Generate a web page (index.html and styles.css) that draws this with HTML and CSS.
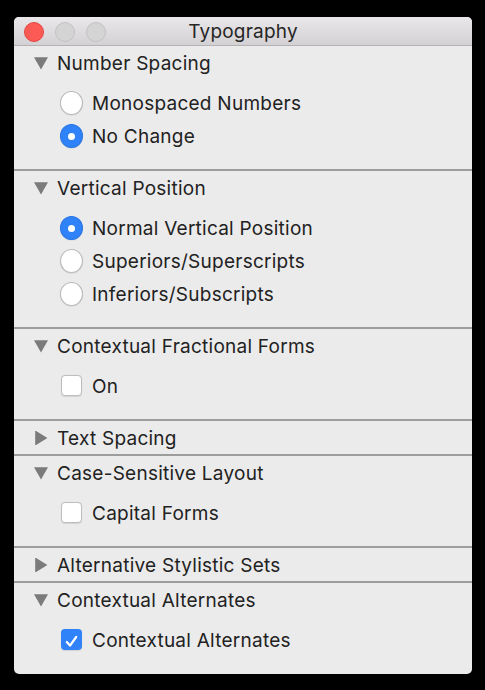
FILE: index.html
```html
<!DOCTYPE html>
<html>
<head>
<meta charset="utf-8">
<link rel="stylesheet" href="styles.css">
</head>
<body>
<div class="window">
  <div class="titlebar">
    <div class="lights">
      <span class="light close"></span>
      <span class="light"></span>
      <span class="light"></span>
    </div>
    <div class="title">Typography</div>
    <div></div>
  </div>

  <div class="section">
    <div class="heading"><svg class="tri" viewBox="0 0 12 12"><path d="M0 1 L12 1 L6 11.5 Z"/></svg><span>Number Spacing</span></div>
    <div class="items">
      <div class="item"><span class="ctl"><span class="radio"></span></span><span>Monospaced Numbers</span></div>
      <div class="item"><span class="ctl"><span class="radio on"></span></span><span>No Change</span></div>
    </div>
  </div>

  <div class="section">
    <div class="heading"><svg class="tri" viewBox="0 0 12 12"><path d="M0 1 L12 1 L6 11.5 Z"/></svg><span>Vertical Position</span></div>
    <div class="items">
      <div class="item"><span class="ctl"><span class="radio on"></span></span><span>Normal Vertical Position</span></div>
      <div class="item"><span class="ctl"><span class="radio"></span></span><span>Superiors/Superscripts</span></div>
      <div class="item"><span class="ctl"><span class="radio"></span></span><span>Inferiors/Subscripts</span></div>
    </div>
  </div>

  <div class="section">
    <div class="heading"><svg class="tri" viewBox="0 0 12 12"><path d="M0 1 L12 1 L6 11.5 Z"/></svg><span>Contextual Fractional Forms</span></div>
    <div class="items">
      <div class="item"><span class="ctl"><span class="check"></span></span><span>On</span></div>
    </div>
  </div>

  <div class="section">
    <div class="heading"><svg class="tri" viewBox="0 0 12 12"><path d="M1 -0.5 L11.5 6 L1 12.5 Z"/></svg><span>Text Spacing</span></div>
  </div>

  <div class="section">
    <div class="heading"><svg class="tri" viewBox="0 0 12 12"><path d="M0 1 L12 1 L6 11.5 Z"/></svg><span>Case-Sensitive Layout</span></div>
    <div class="items">
      <div class="item"><span class="ctl"><span class="check"></span></span><span>Capital Forms</span></div>
    </div>
  </div>

  <div class="section">
    <div class="heading"><svg class="tri" viewBox="0 0 12 12"><path d="M1 -0.5 L11.5 6 L1 12.5 Z"/></svg><span>Alternative Stylistic Sets</span></div>
  </div>

  <div class="section">
    <div class="heading"><svg class="tri" viewBox="0 0 12 12"><path d="M0 1 L12 1 L6 11.5 Z"/></svg><span>Contextual Alternates</span></div>
    <div class="items">
      <div class="item"><span class="ctl"><span class="check on"><svg viewBox="0 0 21 21"><path d="M5.8 11 L9 14.6 L15.2 6" fill="none" stroke="#fff" stroke-width="2.2" stroke-linecap="round" stroke-linejoin="round"/></svg></span></span><span>Contextual Alternates</span></div>
    </div>
  </div>
</div>
</body>
</html>
```

FILE: styles.css
```css
html, body {
  margin: 0;
  padding: 0;
  background: #000;
}
body {
  padding: 17px 13px 0 14px;
  font-family: Inter, "Noto Sans", sans-serif;
  color: #222;
}
.window {
  width: 458px;
  height: 657px;
  background: #ebebeb;
  border-radius: 5px;
  overflow: hidden;
  box-sizing: border-box;
}
.titlebar {
  height: 28px;
  border-bottom: 1px solid #b3b3b3;
  background: linear-gradient(#e9e7e9, #d3d1d3);
  display: grid;
  grid-template-columns: 1fr auto 1fr;
  align-items: center;
}
.lights {
  display: flex;
  gap: 11px;
  padding-left: 10px;
  margin-top: 2px;
}
.light {
  width: 20px;
  height: 20px;
  box-sizing: border-box;
  border-radius: 50%;
  background: #d5d4d5;
  border: 1px solid #c2c1c2;
}
.light.close {
  background: #fc5a55;
  border-color: #e24642;
}
.title {
  font-size: 19px;
  color: #262626;
  letter-spacing: 0.2px;
  padding-top: 1px;
}
.section + .section {
  border-top: 2px solid #9d9d9d;
}
.heading {
  height: 33px;
  display: flex;
  align-items: center;
  padding-left: 20px;
  font-size: 19px;
  letter-spacing: 0.25px;
}
.heading span,
.item span:last-child {
  padding-top: 2px;
}
.tri {
  flex: none;
  width: 14px;
  height: 14px;
  fill: #7b7b7b;
  margin-right: 9px;
}
.items {
  padding: 7px 0 17px 0;
}
.item {
  height: 33px;
  display: flex;
  align-items: center;
  padding-left: 46px;
  font-size: 19px;
  letter-spacing: 0.25px;
}
.ctl {
  flex: none;
  width: 23px;
  height: 23px;
  display: flex;
  align-items: center;
  justify-content: center;
  margin-right: 9px;
}
.radio {
  width: 24px;
  height: 24px;
  box-sizing: border-box;
  border-radius: 50%;
  background: #fff;
  border: 1px solid #bababa;
  box-shadow: 0 0.5px 1px rgba(0,0,0,0.12);
  display: flex;
  align-items: center;
  justify-content: center;
}
.radio.on {
  background: #2f82f7;
  border-color: #2a76e6;
}
.radio.on::after {
  content: "";
  width: 7px;
  height: 7px;
  border-radius: 50%;
  background: #fff;
}
.check {
  width: 21px;
  height: 21px;
  box-sizing: border-box;
  border-radius: 4px;
  background: #fff;
  border: 1px solid #bdbdbd;
  box-shadow: 0 0.5px 1px rgba(0,0,0,0.1);
}
.check.on {
  background: #2f82f7;
  border: none;
}
.check svg {
  display: block;
  width: 21px;
  height: 21px;
}
```
